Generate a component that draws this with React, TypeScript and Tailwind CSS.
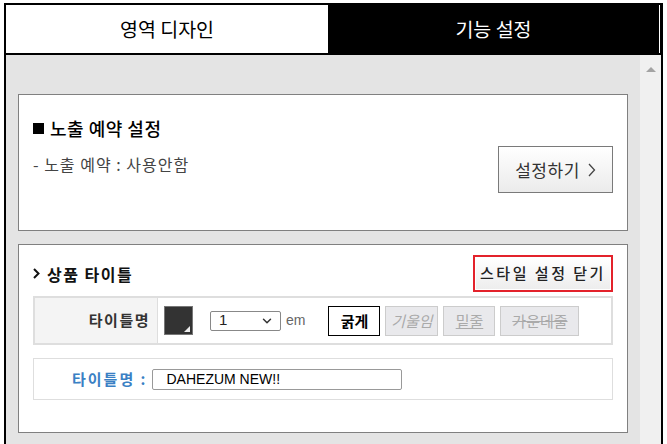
import { ChevronDown } from "lucide-react";

const font = { fontFamily: '"Noto Sans CJK KR", "Liberation Sans", sans-serif' };
const latin = { fontFamily: '"Liberation Sans", sans-serif' };

function Chevron({ w, h, stroke, className }: { w: number; h: number; stroke: number; className?: string }) {
  return (
    <svg width={w} height={h} viewBox={`0 0 ${w} ${h}`} className={className}>
      <path d={`M1 1 L${w - 1.5} ${h / 2} L1 ${h - 1}`} fill="none" stroke="currentColor" strokeWidth={stroke} />
    </svg>
  );
}

function StyleButton({ label, className }: { label: string; className: string }) {
  return (
    <button
      className={`flex h-[30px] items-center justify-center whitespace-nowrap text-[15px] leading-none ${className}`}
    >
      {label}
    </button>
  );
}

export default function App() {
  return (
    <div className="h-[444px] w-[667px] overflow-hidden bg-white" style={font}>
      <div className="ml-[4px] mt-[3px] w-[659px] border-x-2 border-t-2 border-black bg-black">
        {/* tabs */}
        <div className="flex h-[50px] border-b-2 border-black">
          <div className="flex w-[322px] items-center justify-center bg-white text-[19.5px] text-black">
            영역 디자인
          </div>
          <div className="mr-[1px] flex flex-1 items-center justify-center border-r border-white bg-black text-[19.5px] text-white">
            기능 설정
          </div>
        </div>

        <div className="flex h-[400px]">
          <div className="flex-1 bg-[#e4e4e4] px-[12px] pt-[39px]">
            {/* card 1 */}
            <div className="flex h-[137px] items-start justify-between border border-[#808080] bg-white">
              <div className="pl-[14px] pt-[21px]">
                <div className="flex items-center gap-[6px] text-[18px] font-medium leading-[24px] text-black">
                  <span className="inline-block h-[11px] w-[11px] bg-black" />
                  <span className="tracking-[0.5px]">노출 예약 설정</span>
                </div>
                <div className="mt-[14px] text-[16px] leading-[20px] tracking-[1px] text-[#444]">
                  - 노출 예약 : 사용안함
                </div>
              </div>
              <button className="mr-[14px] mt-[51px] flex h-[47px] w-[115px] items-center justify-center gap-[8px] border border-[#7a7a7a] bg-gradient-to-b from-white to-[#ebebeb] text-[17px] tracking-[0.5px] text-[#333]">
                <span>설정하기</span>
                <Chevron w={8} h={14} stroke={1.3} className="text-[#444]" />
              </button>
            </div>

            {/* card 2 */}
            <div className="mt-[13px] border border-[#808080] bg-white px-[14px] pb-[32px] pt-[10px]">
              <div className="flex h-[37px] items-center justify-between">
                <div className="flex items-center gap-[7px] text-[16px] font-bold tracking-[1.5px] text-[#111]">
                  <Chevron w={7} h={11} stroke={2} className="text-[#111]" />
                  <span>상품 타이틀</span>
                </div>
                <div className="h-[37px] w-[140px] border-2 border-[#e3222b] p-[1px]">
                  <button className="flex h-full w-full items-center justify-center bg-gradient-to-b from-white to-[#ededed] text-[15px] font-medium tracking-[2.5px] text-[#222]">
                    스타일 설정 닫기
                  </button>
                </div>
              </div>

              {/* style row */}
              <div className="mt-[4px] flex h-[49px] border-2 border-[#dedede]">
                <div className="flex w-[123px] items-center justify-end border-r border-[#dedede] bg-[#f4f4f4] pr-[7px] text-[15px] font-bold tracking-[1.5px] text-[#333]">
                  타이틀명
                </div>
                <div className="flex flex-1 items-center pl-[6px]">
                  <div className="relative h-[29px] w-[29px] border border-[#777] bg-[#333]">
                    <div className="absolute bottom-[2px] right-[2px] h-0 w-0 border-b-[6px] border-l-[6px] border-b-[#eee] border-l-transparent" />
                  </div>
                  <div
                    className="ml-[17px] flex h-[20px] w-[71px] items-center justify-between rounded-[2px] border border-[#888] bg-white pl-[8px] pr-[6px] text-[15px] text-[#222]"
                    style={latin}
                  >
                    <span>1</span>
                    <ChevronDown size={14} strokeWidth={2.5} className="text-[#333]" />
                  </div>
                  <span className="ml-[5px] text-[14px] text-[#666]" style={latin}>
                    em
                  </span>
                  <div className="ml-[23px] flex gap-[5px]">
                    <StyleButton label="굵게" className="w-[52px] border border-black bg-white font-bold text-black" />
                    <StyleButton label="기울임" className="w-[53px] border border-[#ccc] bg-[#e9e9ec] italic text-[#aaa]" />
                    <StyleButton label="밑줄" className="w-[52px] border border-[#ccc] bg-[#e9e9ec] text-[#aaa] underline" />
                    <StyleButton label="가운데줄" className="w-[79px] border border-[#ccc] bg-[#e9e9ec] text-[#aaa] line-through" />
                  </div>
                </div>
              </div>

              {/* preview row */}
              <div className="mt-[13px] flex h-[42px] items-center border border-[#dedede] pl-[38px]">
                <span className="text-[15px] font-bold tracking-[2px] text-[#3a80c4]">타이틀명 :</span>
                <div
                  className="ml-[5px] flex h-[21px] w-[250px] items-center rounded-[2px] border border-[#999] pl-[13px] text-[14px] text-black"
                  style={latin}
                >
                  DAHEZUM NEW!!
                </div>
              </div>
            </div>
          </div>

          {/* scrollbar */}
          <div className="flex w-[21px] justify-center bg-[#f0f0f0] pt-[12px]">
            <div className="h-0 w-0 border-x-[5px] border-b-[5px] border-x-transparent border-b-[#a3a3a3]" />
          </div>
        </div>
      </div>
    </div>
  );
}
